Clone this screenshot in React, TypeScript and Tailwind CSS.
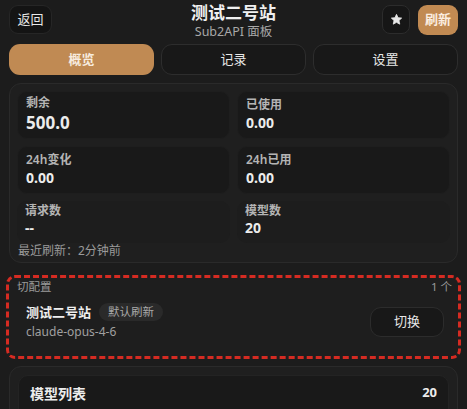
import React from "react";

const font = { fontFamily: '"Noto Sans", "Noto Sans CJK SC", sans-serif' };

function Stat({ label, value, big }: { label: string; value: string; big?: boolean }) {
  return (
    <div className={`h-[48px] rounded-[10px] bg-[#191919] border border-[#1e1e1e] px-[8px] ${big ? "pt-[3px]" : "pt-[5px]"} flex flex-col`}>
      <div className="text-[12px] leading-[16px] text-[#b4b4b4] font-semibold">{label}</div>
      <div className={`${big ? "text-[17px] leading-[24px]" : "text-[14px] leading-[20px]"} font-bold text-[#ececec]`}>{value}</div>
    </div>
  );
}

export default function App() {
  return (
    <div style={font} className="w-[467px] h-[409px] overflow-hidden bg-[#1c1c1c] text-[#e8e8e8] flex flex-col">
      {/* header */}
      <div className="relative shrink-0 h-[40px] flex items-start justify-between px-[9px] pt-[5px]">
        <button className="h-[29px] w-[43px] rounded-[9px] bg-[#141414] border border-[#262626] text-[13px] text-[#e8e8e8]">返回</button>
        <div className="absolute left-0 right-0 top-[2px] flex flex-col items-center pointer-events-none">
          <div className="text-[17px] leading-[22px] font-bold text-[#f0f0f0]">测试二号站</div>
          <div className="text-[12.5px] leading-[15px] text-[#a8a8a8]">Sub2API 面板</div>
        </div>
        <div className="flex gap-[8px]">
          <button className="h-[29px] w-[28px] rounded-[8px] bg-[#161616] border border-[#2c2c2c] flex items-center justify-center">
            <svg width="13" height="13" viewBox="0 0 24 24" fill="#e6e6e6"><path d="M12 2.5l2.9 6.2 6.6.7-4.9 4.6 1.4 6.6L12 17.3 6 20.6l1.4-6.6L2.5 9.4l6.6-.7z" strokeLinejoin="round" stroke="#e6e6e6" strokeWidth="1.5"/></svg>
          </button>
          <button className="h-[30px] w-[40px] rounded-[9px] bg-[#c18a52] text-[13px] text-[#fbeee0] font-semibold">刷新</button>
        </div>
      </div>

      {/* tabs */}
      <div className="shrink-0 grid grid-cols-3 gap-[7px] px-[9px] mt-[4px]">
        <button className="h-[31px] rounded-[11px] bg-[#c08a53] text-[13px] text-[#f7ecdf] font-semibold">概览</button>
        <button className="h-[31px] rounded-[11px] bg-[#181818] border border-[#2d2d2d] text-[13px] text-[#e8e8e8]">记录</button>
        <button className="h-[31px] rounded-[11px] bg-[#181818] border border-[#2d2d2d] text-[13px] text-[#e8e8e8]">设置</button>
      </div>

      {/* stats panel */}
      <div className="shrink-0 mx-[9px] mt-[8px] rounded-[12px] bg-[#1f1f1f] border border-[#2a2a2a] px-[7px] pt-[7px] pb-[4px]">
        <div className="grid grid-cols-2 gap-x-[7px] gap-y-[7px]">
          <Stat label="剩余" value="500.0" big />
          <Stat label="已使用" value="0.00" />
          <Stat label="24h变化" value="0.00" />
          <Stat label="24h已用" value="0.00" />
          <div className="h-[42px] rounded-[10px] bg-[#1d1d1d] px-[8px] pt-[2px] flex flex-col">
            <div className="text-[12px] leading-[16px] text-[#b4b4b4] font-semibold">请求数</div>
            <div className="text-[14px] leading-[18px] font-bold text-[#ececec]">--</div>
          </div>
          <div className="h-[42px] rounded-[10px] bg-[#1d1d1d] px-[8px] pt-[2px] flex flex-col">
            <div className="text-[12px] leading-[16px] text-[#b4b4b4] font-semibold">模型数</div>
            <div className="text-[14px] leading-[18px] font-bold text-[#ececec]">20</div>
          </div>
        </div>
        <div className="text-[12px] leading-[14px] text-[#9a9a9a] mt-[1px] pl-[1px]">最近刷新：2分钟前</div>
      </div>

      {/* switch config */}
      <div className="shrink-0 mx-[6px] mt-[12px] h-[84px] rounded-[9px] border-[3px] border-dashed border-[#d52b22] bg-[#1e1e1e] relative">
        <div className="flex justify-between pl-[8px] pr-[6px] pt-[2px] text-[11.5px] leading-[14px] text-[#9a9a9a]">
          <span>切配置</span>
          <span>1 个</span>
        </div>
        <div className="flex items-center justify-between pl-[17px] pr-[14px] mt-[9px]">
          <div className="flex flex-col">
            <div className="flex items-center gap-[8px]">
              <span className="text-[13px] leading-[18px] font-bold text-[#eeeeee]">测试二号站</span>
              <span className="rounded-full bg-[#2a2a2a] px-[9px] h-[18px] flex items-center text-[11.5px] text-[#a8a8a8]">默认刷新</span>
            </div>
            <div className="text-[12px] leading-[16px] text-[#a0a0a0] mt-[3px]">claude-opus-4-6</div>
          </div>
          <button className="h-[30px] w-[74px] rounded-[11px] bg-[#181818] border border-[#2c2c2c] text-[13px] text-[#e8e8e8]">切换</button>
        </div>
      </div>

      {/* model list */}
      <div className="shrink-0 mx-[9px] mt-[7px] rounded-t-[12px] bg-[#1f1f1f] border border-[#2a2a2a] px-[8px] pt-[8px] h-[80px]">
        <div className="rounded-[10px] bg-[#191919] border border-[#232323] h-[48px] flex items-start justify-between px-[11px] pt-[7px]">
          <span className="text-[14px] font-bold text-[#ececec]">模型列表</span>
          <span className="text-[13px] font-bold text-[#ececec]">20</span>
        </div>
      </div>
    </div>
  );
}
